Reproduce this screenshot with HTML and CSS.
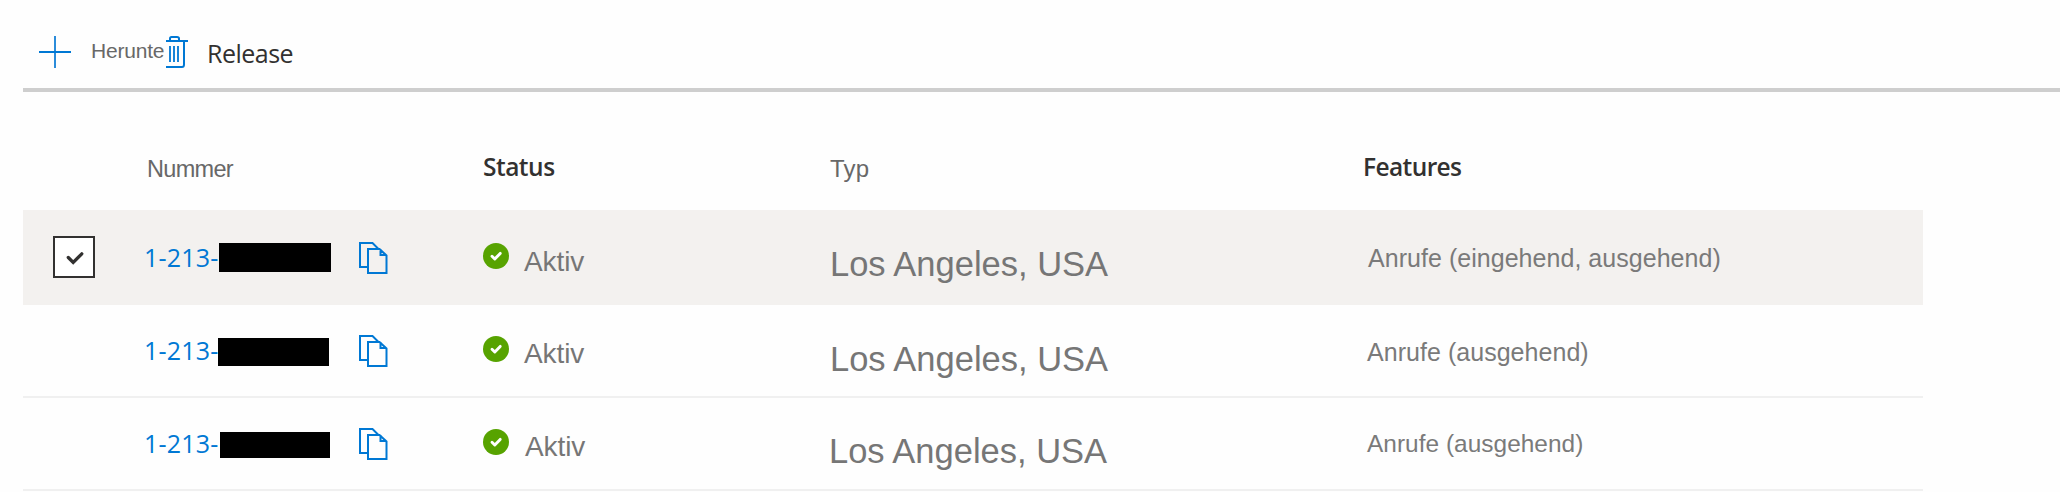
FILE: index.html
```
<!DOCTYPE html>
<html lang="de">
<head>
<meta charset="utf-8">
<title>Nummern</title>
<link rel="stylesheet" href="styles.css">
</head>
<body>
<svg class="defs" width="0" height="0">
  <symbol id="copy" viewBox="0 0 29 32"><path d="M8.5 25H1V1h12.5l6 6M9 7h11.5l7 6.5V31H9ZM21.5 7v6h6" fill="none" stroke="#0078d4" stroke-width="2"/></symbol>
  <symbol id="ok" viewBox="0 0 26 26"><circle cx="13" cy="13" r="13" fill="#57a300"/><path d="M9 13.2l2.800 2.800 5.400-5.600" fill="none" stroke="#fff" stroke-width="2.9" stroke-linecap="round" stroke-linejoin="round"/></symbol>
</svg>
<header class="toolbar">
  <svg class="plus" width="32" height="32" viewBox="0 0 32 32"><path d="M16 0v32" stroke="#2b8cda" stroke-width="2"/><path d="M0 16h32" stroke="#0078d4" stroke-width="2"/></svg>
  <span class="download">Herunte</span>
  <svg class="trash" width="22" height="32" viewBox="0 0 22 32" fill="none" stroke="#0078d4" stroke-width="2"><path d="M0 5h22M4 5V2.5Q4 1 5.500 1h5.500Q13 1 13 2.500V5M18 5v23.500Q18 31 16 31H0"/><path d="M4 10v16M8 10v16M12 10v16" stroke-width="1.800"/></svg>
  <span class="release">Release</span>
</header>
<main class="table">
  <div class="row head">
    <span></span><span class="h-num">Nummer</span><span class="h-strong">Status</span><span class="h-num h-typ">Typ</span><span class="h-strong h-feat">Features</span>
  </div>
  <div class="row r1">
    <div><div class="check"><svg width="38" height="38" viewBox="0 0 38 38"><path d="M13.300 19.500l4.900 4.900 8.600-8.600" fill="none" stroke="#323130" stroke-width="3.300" stroke-linecap="round"/></svg></div></div>
    <div class="number"><span class="phone">1-213-</span><span class="mask"></span><svg class="copy" width="29" height="32"><use href="#copy"/></svg></div>
    <div class="status"><svg class="ok" width="26" height="26"><use href="#ok"/></svg><span class="active">Aktiv</span></div>
    <div class="type">Los Angeles, USA</div>
    <div class="features">Anrufe (eingehend, ausgehend)</div>
  </div>
  <div class="row r2">
    <div></div>
    <div class="number"><span class="phone">1-213-</span><span class="mask"></span><svg class="copy" width="29" height="32"><use href="#copy"/></svg></div>
    <div class="status"><svg class="ok" width="26" height="26"><use href="#ok"/></svg><span class="active">Aktiv</span></div>
    <div class="type">Los Angeles, USA</div>
    <div class="features">Anrufe (ausgehend)</div>
  </div>
  <div class="row r3">
    <div></div>
    <div class="number"><span class="phone">1-213-</span><span class="mask"></span><svg class="copy" width="29" height="32"><use href="#copy"/></svg></div>
    <div class="status"><svg class="ok" width="26" height="26"><use href="#ok"/></svg><span class="active">Aktiv</span></div>
    <div class="type">Los Angeles, USA</div>
    <div class="features">Anrufe (ausgehend)</div>
  </div>
</main>
</body>
</html>
```
FILE: styles.css
```
* { box-sizing: border-box; }
body { margin: 0; padding-left: 23px; background: #fefefe; font-family: "Liberation Sans", Arial, sans-serif; overflow: hidden; }
svg { display: block; flex: none; }
.defs { position: absolute; }

.toolbar { display: flex; align-items: flex-start; height: 92px; padding: 36px 0 0 16px; border-bottom: 4px solid #cecece; }
.download { width: 75px; margin-left: 20px; font-size: 21px; line-height: 30px; color: #686868; letter-spacing: -0.2px; }
.release { margin: 2px 0 0 19px; font: 25px/30px "Open Sans", sans-serif; color: #323130; letter-spacing: -0.5px; }

.table { width: 1900px; }
.row { display: grid; grid-template-columns: 122px 338px 347px 533px 560px; align-items: start; height: 93px; border-bottom: 2px solid #f0f0f0; white-space: nowrap; }
.head { height: 118px; border: 0; padding-top: 60px; line-height: 30px; }
.h-num { padding: 2px 0 0 2px; font-size: 23.5px; color: #686868; letter-spacing: -0.7px; }
.h-typ { padding-left: 0; font-size: 24px; letter-spacing: 0.2px; }
.h-strong { font: 600 24.5px/30px "Open Sans", sans-serif; color: #323130; letter-spacing: -0.5px; }
.h-feat { letter-spacing: -0.6px; }

.r1 { height: 95px; border: 0; background: #f3f1ef; }
.check { width: 42px; height: 42px; margin: 26px 0 0 30px; border: 2px solid #323130; background: #fff; }
.number, .status { display: flex; align-items: flex-start; }
.phone { width: 75px; margin: 30px 0 0 -1px; font: 25px/30px "Open Sans", sans-serif; letter-spacing: 0.2px; color: #0078d4; }
.mask { width: 111px; height: 28px; margin-top: 33px; margin-left: -1px; background: #000; }
.copy { margin: 30px 0 0 30px; }
.ok { margin-top: 31px; }
.active { margin: 34px 0 0 15px; font-size: 28px; line-height: 30px; letter-spacing: -0.1px; color: #767676; }
.type { margin-top: 34px; font-size: 34.5px; line-height: 40px; color: #767676; }
.features { margin: 32px 0 0 4px; font-size: 25px; line-height: 30px; letter-spacing: 0.04px; color: #7a7a7a; }

.r1 .phone, .r1 .copy { margin-top: 32px; }
.r1 .mask { width: 112px; height: 29px; margin-left: 0; }
.r1 .copy { margin-left: 28px; }
.r1 .ok { margin-top: 33px; }
.r1 .active { margin-top: 37px; }
.r1 .features { margin: 33px 0 0 5px; }

.r3 .mask { width: 110px; height: 26px; margin-top: 34px; margin-left: 1px; }
.r3 .copy { margin-left: 29px; }
.r3 .active { margin-left: 16px; }
.r3 .type { margin: 33px 0 0 -1px; }
.r3 .features { margin-top: 31px; font-size: 24.4px; }
```
